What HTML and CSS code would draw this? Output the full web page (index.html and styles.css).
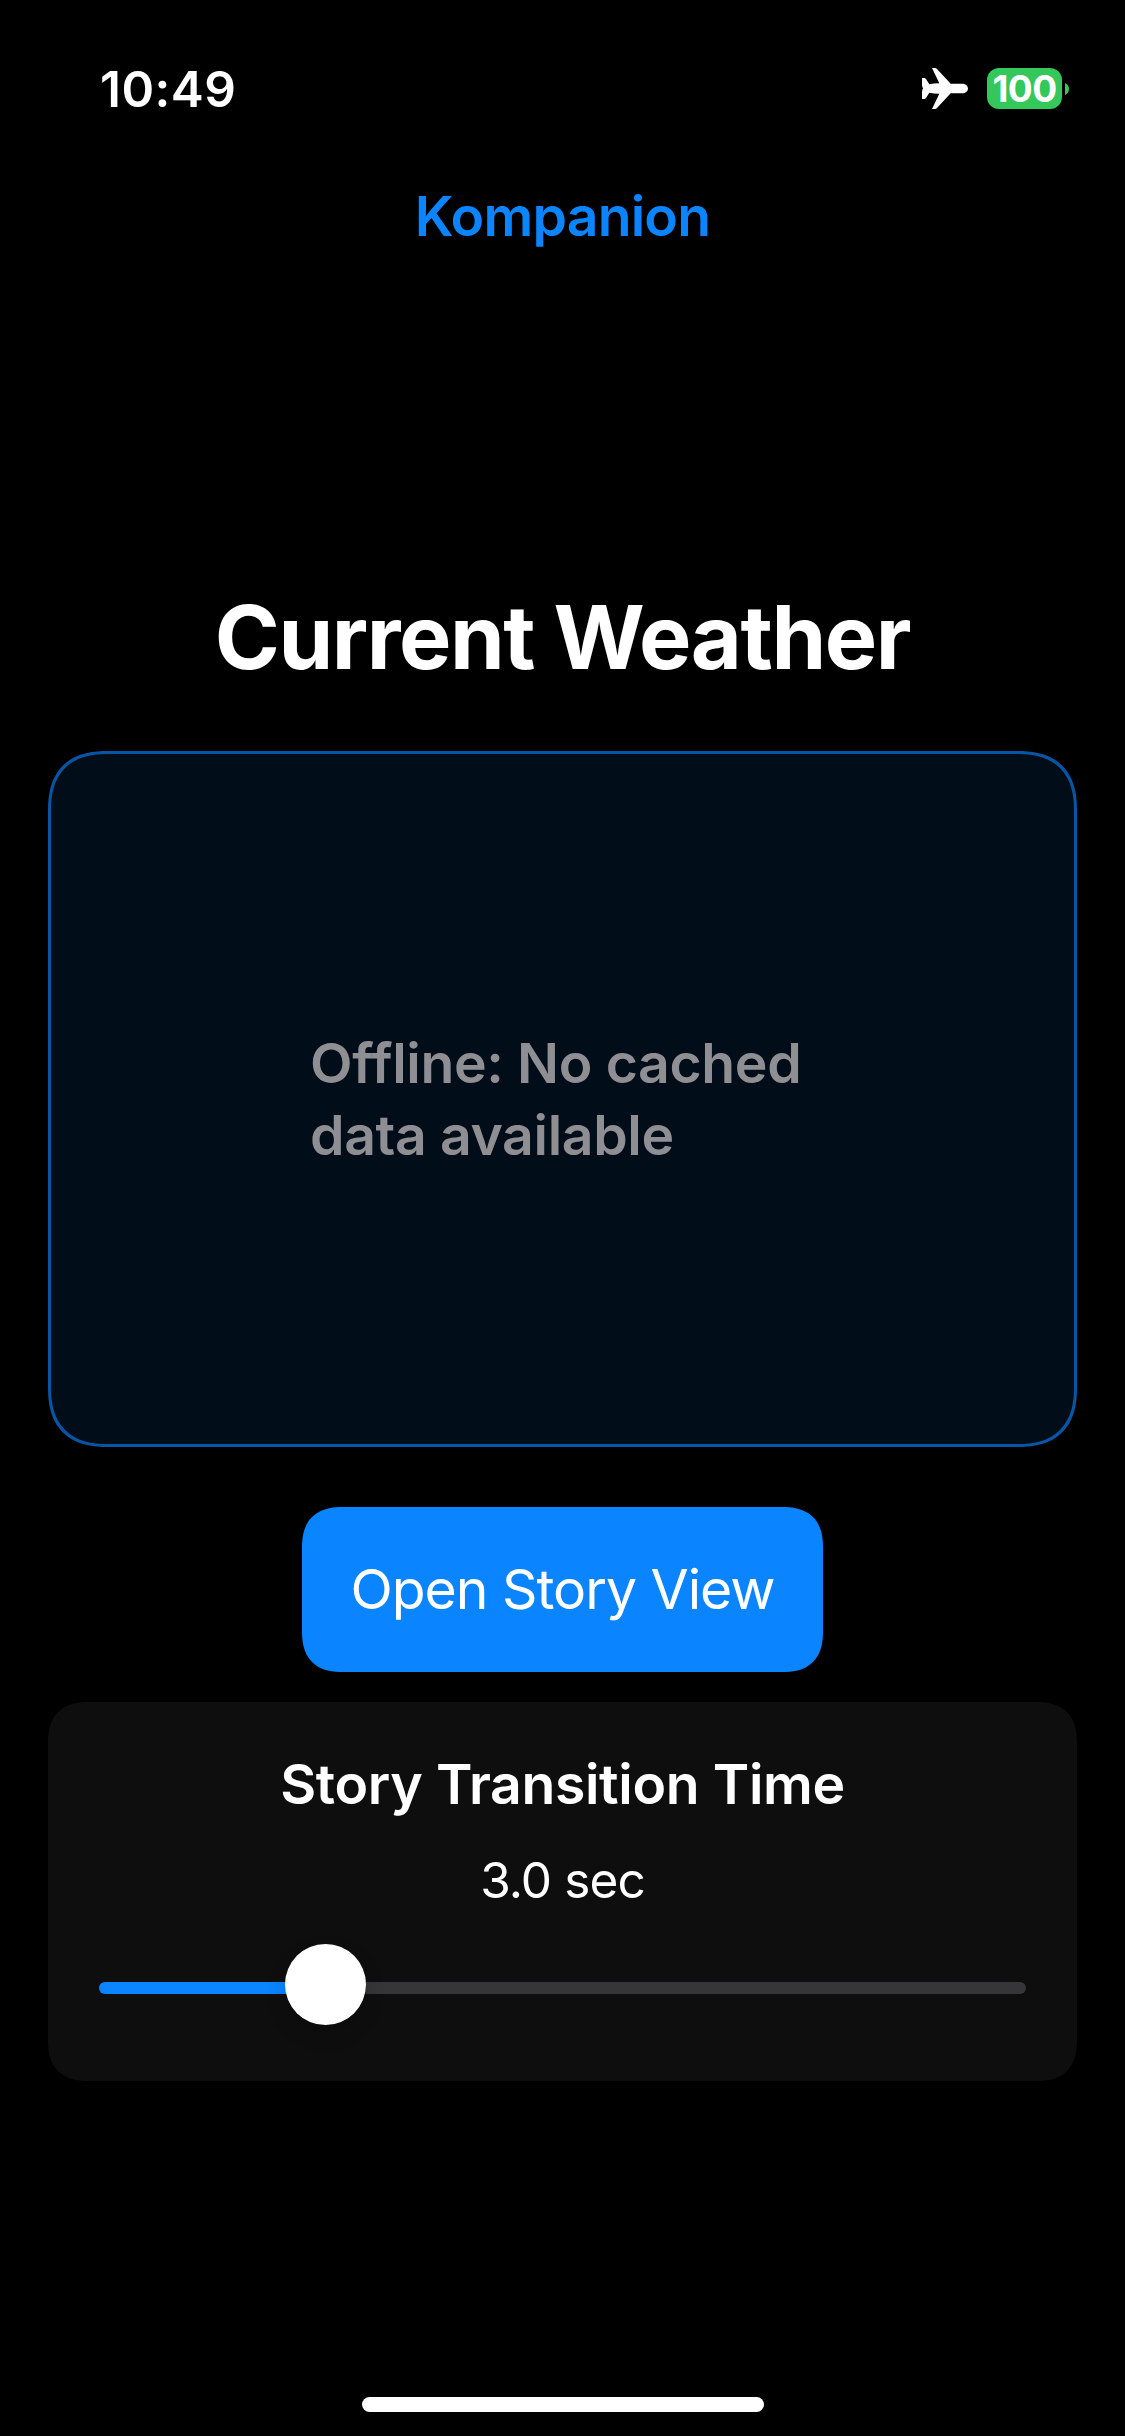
FILE: index.html
```html
<!DOCTYPE html>
<html lang="en">
<head>
<meta charset="utf-8">
<title>Kompanion</title>
<link rel="stylesheet" href="styles.css">
</head>
<body>
<div class="screen">
  <div class="status-bar">
    <span class="time">10:49</span>
    <div class="indicators">
      <svg class="airplane" viewBox="0 0 138 123" aria-label="Airplane mode">
        <path d="M0 30H7Q10 30 12 33L22 49Q35 46 52 46L30 0H39Q42 0 45 3L86 47H121C132 47 138 55 138 61.500C138 68 132 76 121 76H86L45 120Q42 123 39 123H30L52 77Q35 77 22 74L12 90Q10 93 7 93H0V71Q1 65 3 61.500Q1 58 0 52Z" fill="#fff"/>
      </svg>
      <div class="battery"><span class="level">100</span></div>
      <svg class="battery-tip" viewBox="0 0 4 12"><path d="M0 0Q4 2 4 6T0 12Z" fill="#34c759"/></svg>
    </div>
  </div>
  <header class="nav-bar"><span class="nav-title">Kompanion</span></header>
  <main class="content">
    <h1 class="heading">Current Weather</h1>
    <section class="weather-card">
      <p class="weather-message">Offline: No cached<br>data available</p>
    </section>
    <button class="story-button"><span>Open Story View</span></button>
    <section class="settings">
      <h2 class="settings-title">Story Transition Time</h2>
      <p class="settings-value">3.0 sec</p>
      <div class="slider">
        <div class="fill"></div>
        <div class="thumb"></div>
        <div class="rest"></div>
      </div>
    </section>
  </main>
  <div class="home-indicator"></div>
</div>
</body>
</html>
```
FILE: styles.css
```css
* { box-sizing: border-box; }
body { margin: 0; background: #000; }
h1, h2, p { margin: 0; }

.screen {
  display: flex;
  flex-direction: column;
  width: 1125px;
  height: 2436px;
  padding-bottom: 24px;
  background: #000;
  color: #fff;
  font-family: Inter, "Liberation Sans", sans-serif;
  font-size: 55.3px;
  line-height: 72px;
  white-space: nowrap;
}

.status-bar {
  display: flex;
  align-items: center;
  justify-content: space-between;
  height: 132px;
  padding: 45px 56px 0 100px;
}
.time { font-size: 49.5px; font-weight: 600; letter-spacing: 0.5px; }
.indicators { display: flex; align-items: center; }
.airplane { width: 46px; height: 41px; margin-right: 19px; }
.battery {
  display: flex;
  align-items: center;
  justify-content: center;
  width: 75px;
  height: 41px;
  border-radius: 12px;
  background: #34c759;
}
.level { font-size: 37px; font-weight: 700; line-height: 41px; letter-spacing: -0.6px; }
.battery-tip { width: 4px; height: 12px; margin-left: 3px; }

.nav-bar {
  display: flex;
  align-items: center;
  justify-content: center;
  height: 168px;
}
.nav-title { color: #0a84ff; font-weight: 600; letter-spacing: -0.8px; }

.content {
  display: flex;
  flex: 1;
  flex-direction: column;
  align-items: center;
  padding: 286px 48px 0;
}
.heading { font-size: 88px; font-weight: 700; line-height: 102px; letter-spacing: -1.45px; }

.weather-card {
  display: flex;
  align-items: center;
  justify-content: center;
  width: 100%;
  height: 696px;
  margin-top: 63px;
  border: 3px solid #0755a5;
  border-radius: 49px;
  background: #010d19;
}
.weather-message { width: 505px; color: #8e8e93; font-weight: 600; letter-spacing: -0.35px; }

.story-button {
  display: flex;
  align-items: center;
  justify-content: center;
  width: 521px;
  height: 165px;
  margin-top: 60px;
  padding: 0 0 2px;
  border: 0;
  border-radius: 33px;
  background: #0a84ff;
  color: #fff;
  font: inherit;
}
.story-button span { letter-spacing: -1px; }

.settings {
  display: flex;
  flex-direction: column;
  align-items: center;
  width: 100%;
  height: 379px;
  margin-top: 30px;
  padding: 46px 51px 0;
  border-radius: 32px;
  background: #0e0e0e;
}
.settings-title { font-size: inherit; font-weight: 600; letter-spacing: -0.35px; }
.settings-value { margin-top: 30px; font-size: 49.5px; line-height: 60px; letter-spacing: -0.9px; }

/* Continuous corners where the engine can draw them */
@supports (corner-shape: superellipse(1.3)) {
  .weather-card, .story-button, .settings { corner-shape: superellipse(1.3); }
  .weather-card { border-radius: 60px; }
  .story-button, .settings { border-radius: 41px; }
}

.slider {
  display: flex;
  width: 100%;
  height: 81px;
  margin-top: 34px;
}
.fill, .rest { height: 12px; margin-top: 38px; }
.fill { width: 226px; margin-right: -40px; border-radius: 6px 0 0 6px; background: #0a84ff; }
.rest { flex: 1; border-radius: 0 6px 6px 0; background: #363638; }
.thumb {
  z-index: 1;
  width: 81px;
  height: 81px;
  border-radius: 50%;
  background: #fff;
  box-shadow: 0 9px 20px rgba(0, 0, 0, 0.15);
}

.home-indicator {
  align-self: center;
  width: 402px;
  height: 15px;
  border-radius: 8px;
  background: #fff;
}
```
